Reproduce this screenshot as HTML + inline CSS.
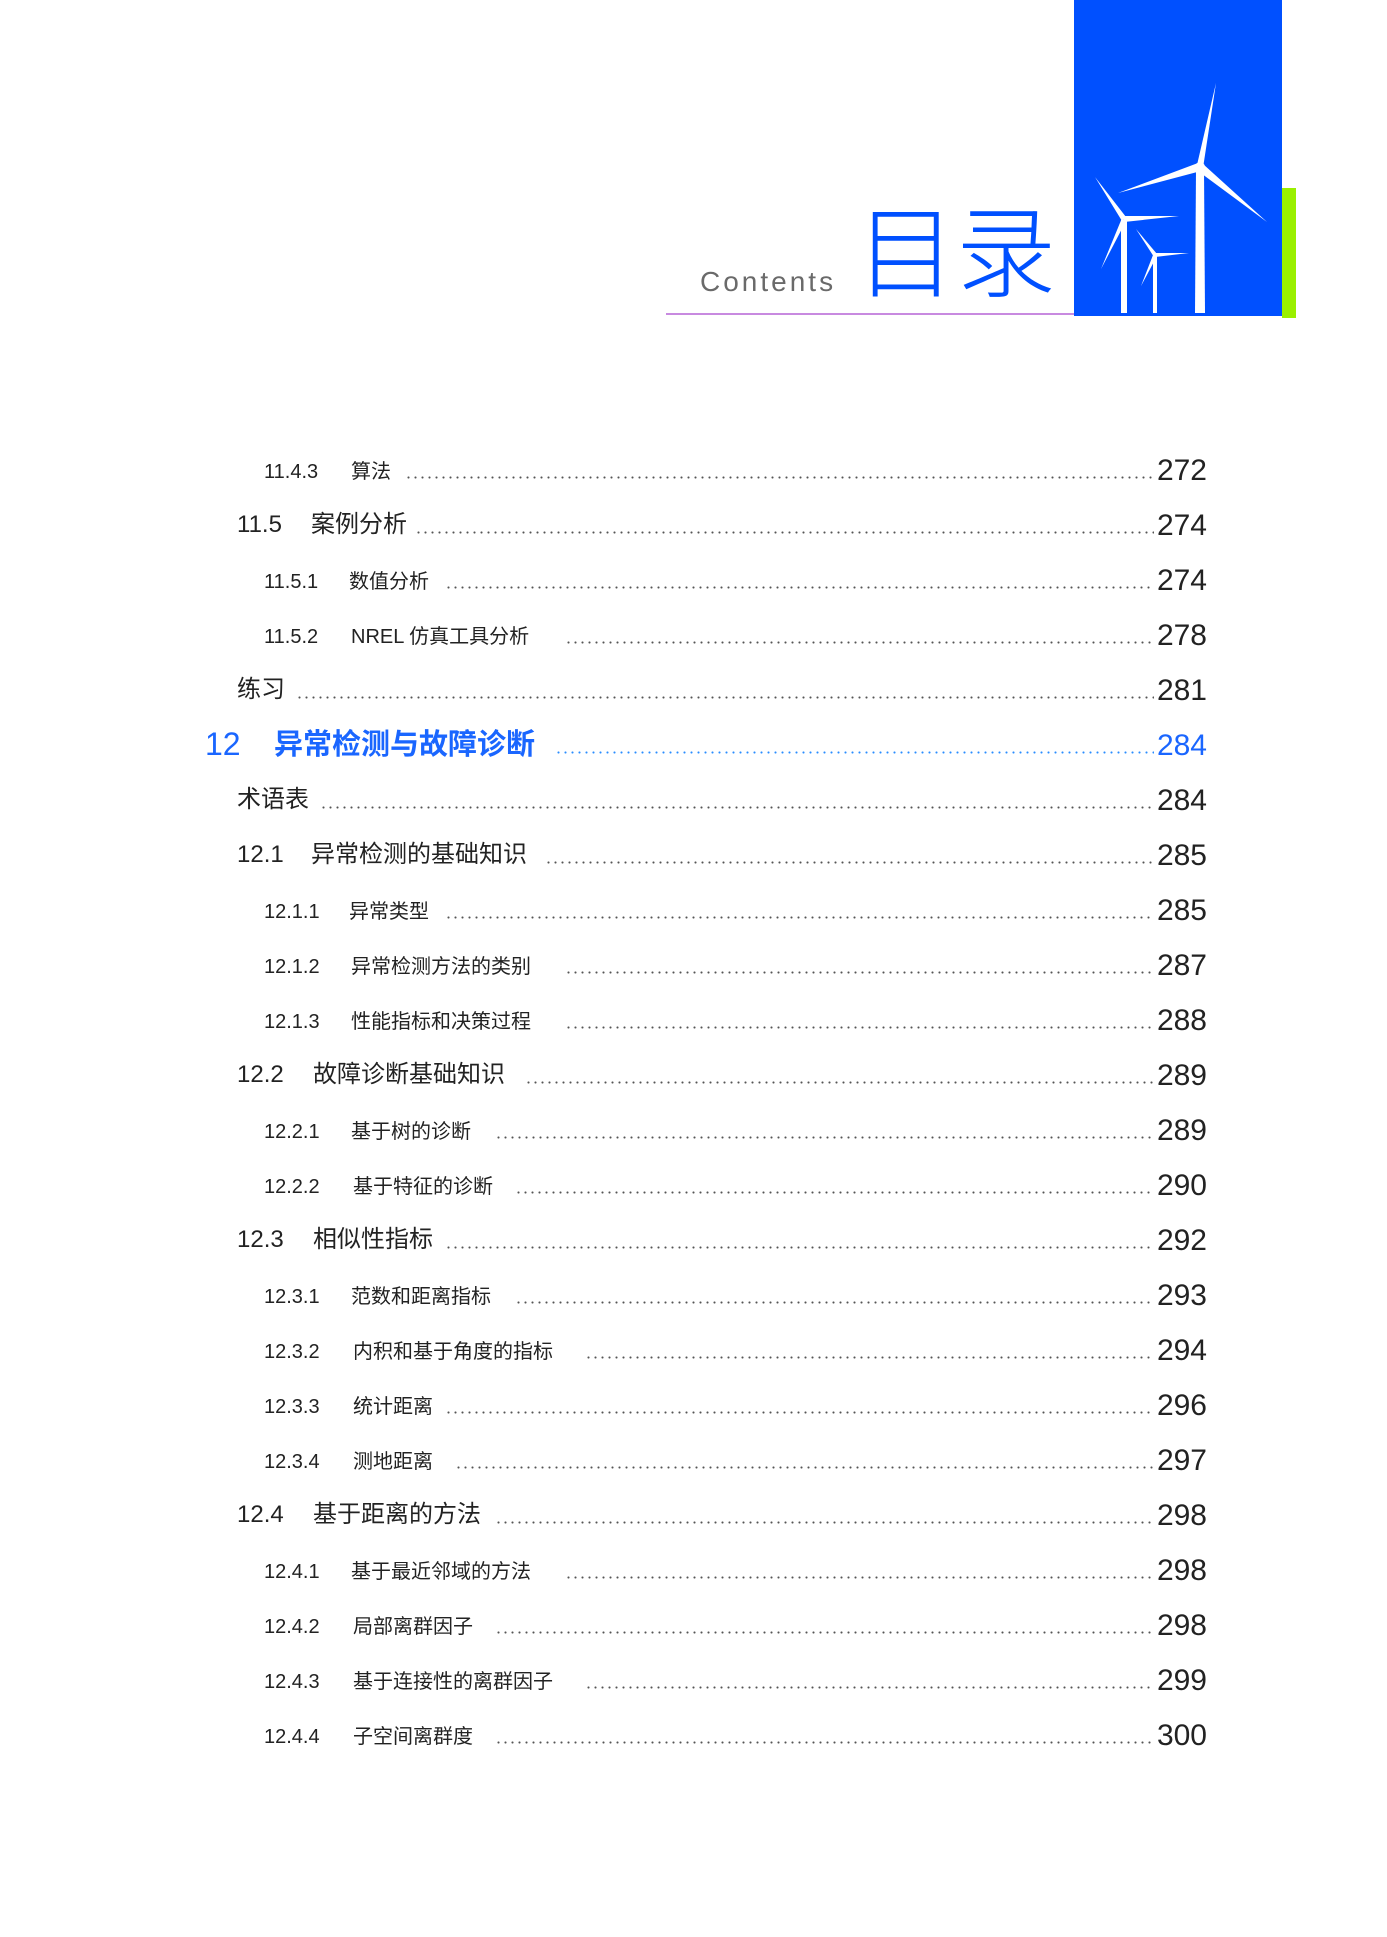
<!DOCTYPE html>
<html><head><meta charset="utf-8"><style>
body{margin:0;background:#fff;}
#p{position:relative;width:1387px;height:1937px;overflow:hidden;background:#fff;font-family:"Liberation Sans","Noto Sans CJK SC",sans-serif;color:#222;}
.row{position:absolute;left:0;width:1387px;height:40px;}
.num{position:absolute;bottom:6px;}
.tt{position:absolute;bottom:6px;white-space:nowrap;background:#fff;padding-right:4px;}
.dots{position:absolute;bottom:11px;height:3px;right:222px;background-image:radial-gradient(circle,#555 0.9px,transparent 1.2px);background-size:7px 3px;}
.pg{position:absolute;right:180px;bottom:2px;font-size:30px;background:#fff;padding-left:3px;}
.l3 .num,.l3 .tt{font-size:20px;}
.l2 .num,.l2 .tt{font-size:24px;}
</style></head><body><div id="p">
<div style="position:absolute;left:666px;top:313px;width:410px;height:2px;background:#c88ae0"></div>
<div style="position:absolute;left:1074px;top:0;width:208px;height:316px;background:#0050ff">
<svg width="208" height="316" viewBox="0 0 208 316">
<g fill="#fff" stroke="none">
<polygon points="122,170 130,170 131,313 121,313"/>
<polygon points="123,165 129,168 142,83"/>
<polygon points="124,163 127,171 44,193"/>
<polygon points="124,171 129,164 193,222"/>
<circle cx="126" cy="167" r="5"/>
<polygon points="47,220 53,220 53,313 47,313"/>
<polygon points="48,221 52,217 21,177"/>
<polygon points="50,216 50,222 105,216"/>
<polygon points="48,218 52,221 27,269"/>
<polygon points="79,256 83,256 83,313 79,313"/>
<polygon points="80,257 83,254 62,229"/>
<polygon points="81,253 81,257 115,253"/>
<polygon points="79,255 83,256 67,286"/>
</g></svg></div>
<div style="position:absolute;left:1282px;top:188px;width:14px;height:130px;background:#9af000"></div>
<div style="position:absolute;left:700px;top:266px;font-size:28px;letter-spacing:3px;color:#6a6a6a">Contents</div>
<div style="position:absolute;left:856px;top:186px;font-size:100px;line-height:120px;color:#0050ff;font-family:'Noto Sans CJK SC',sans-serif;font-weight:300">目录</div>

<div class="row l3" style="top:450px"><span class="num" style="left:264px">11.4.3</span><span class="tt" style="left:351px">算法</span><div class="dots" style="left:405px"></div><span class="pg">272</span></div>
<div class="row l2" style="top:505px"><span class="num" style="left:237px">11.5</span><span class="tt" style="left:311px">案例分析</span><div class="dots" style="left:415px"></div><span class="pg">274</span></div>
<div class="row l3" style="top:560px"><span class="num" style="left:264px">11.5.1</span><span class="tt" style="left:349px">数值分析</span><div class="dots" style="left:445px"></div><span class="pg">274</span></div>
<div class="row l3" style="top:615px"><span class="num" style="left:264px">11.5.2</span><span class="tt" style="left:351px">NREL 仿真工具分析</span><div class="dots" style="left:565px"></div><span class="pg">278</span></div>
<div class="row l2" style="top:670px"><span class="tt" style="left:237px">练习</span><div class="dots" style="left:296px"></div><span class="pg">281</span></div>
<div class="row" style="top:725px;color:#1a66ff"><span class="num" style="left:205px;font-size:32px;bottom:2px">12</span><span class="tt" style="left:274px;font-size:29px;bottom:2px;font-weight:bold">异常检测与故障诊断</span><div class="dots" style="left:555px;background-image:radial-gradient(circle,#2a8cff 0.9px,transparent 1.2px)"></div><span class="pg" style="color:#1a66ff">284</span></div>
<div class="row l2" style="top:780px"><span class="tt" style="left:237px">术语表</span><div class="dots" style="left:320px"></div><span class="pg">284</span></div>
<div class="row l2" style="top:835px"><span class="num" style="left:237px">12.1</span><span class="tt" style="left:311px">异常检测的基础知识</span><div class="dots" style="left:545px"></div><span class="pg">285</span></div>
<div class="row l3" style="top:890px"><span class="num" style="left:264px">12.1.1</span><span class="tt" style="left:349px">异常类型</span><div class="dots" style="left:445px"></div><span class="pg">285</span></div>
<div class="row l3" style="top:945px"><span class="num" style="left:264px">12.1.2</span><span class="tt" style="left:351px">异常检测方法的类别</span><div class="dots" style="left:565px"></div><span class="pg">287</span></div>
<div class="row l3" style="top:1000px"><span class="num" style="left:264px">12.1.3</span><span class="tt" style="left:351px">性能指标和决策过程</span><div class="dots" style="left:565px"></div><span class="pg">288</span></div>
<div class="row l2" style="top:1055px"><span class="num" style="left:237px">12.2</span><span class="tt" style="left:313px">故障诊断基础知识</span><div class="dots" style="left:525px"></div><span class="pg">289</span></div>
<div class="row l3" style="top:1110px"><span class="num" style="left:264px">12.2.1</span><span class="tt" style="left:351px">基于树的诊断</span><div class="dots" style="left:495px"></div><span class="pg">289</span></div>
<div class="row l3" style="top:1165px"><span class="num" style="left:264px">12.2.2</span><span class="tt" style="left:353px">基于特征的诊断</span><div class="dots" style="left:515px"></div><span class="pg">290</span></div>
<div class="row l2" style="top:1220px"><span class="num" style="left:237px">12.3</span><span class="tt" style="left:313px">相似性指标</span><div class="dots" style="left:445px"></div><span class="pg">292</span></div>
<div class="row l3" style="top:1275px"><span class="num" style="left:264px">12.3.1</span><span class="tt" style="left:351px">范数和距离指标</span><div class="dots" style="left:515px"></div><span class="pg">293</span></div>
<div class="row l3" style="top:1330px"><span class="num" style="left:264px">12.3.2</span><span class="tt" style="left:353px">内积和基于角度的指标</span><div class="dots" style="left:585px"></div><span class="pg">294</span></div>
<div class="row l3" style="top:1385px"><span class="num" style="left:264px">12.3.3</span><span class="tt" style="left:353px">统计距离</span><div class="dots" style="left:445px"></div><span class="pg">296</span></div>
<div class="row l3" style="top:1440px"><span class="num" style="left:264px">12.3.4</span><span class="tt" style="left:353px">测地距离</span><div class="dots" style="left:455px"></div><span class="pg">297</span></div>
<div class="row l2" style="top:1495px"><span class="num" style="left:237px">12.4</span><span class="tt" style="left:313px">基于距离的方法</span><div class="dots" style="left:495px"></div><span class="pg">298</span></div>
<div class="row l3" style="top:1550px"><span class="num" style="left:264px">12.4.1</span><span class="tt" style="left:351px">基于最近邻域的方法</span><div class="dots" style="left:565px"></div><span class="pg">298</span></div>
<div class="row l3" style="top:1605px"><span class="num" style="left:264px">12.4.2</span><span class="tt" style="left:353px">局部离群因子</span><div class="dots" style="left:495px"></div><span class="pg">298</span></div>
<div class="row l3" style="top:1660px"><span class="num" style="left:264px">12.4.3</span><span class="tt" style="left:353px">基于连接性的离群因子</span><div class="dots" style="left:585px"></div><span class="pg">299</span></div>
<div class="row l3" style="top:1715px"><span class="num" style="left:264px">12.4.4</span><span class="tt" style="left:353px">子空间离群度</span><div class="dots" style="left:495px"></div><span class="pg">300</span></div>
</div></body></html>
